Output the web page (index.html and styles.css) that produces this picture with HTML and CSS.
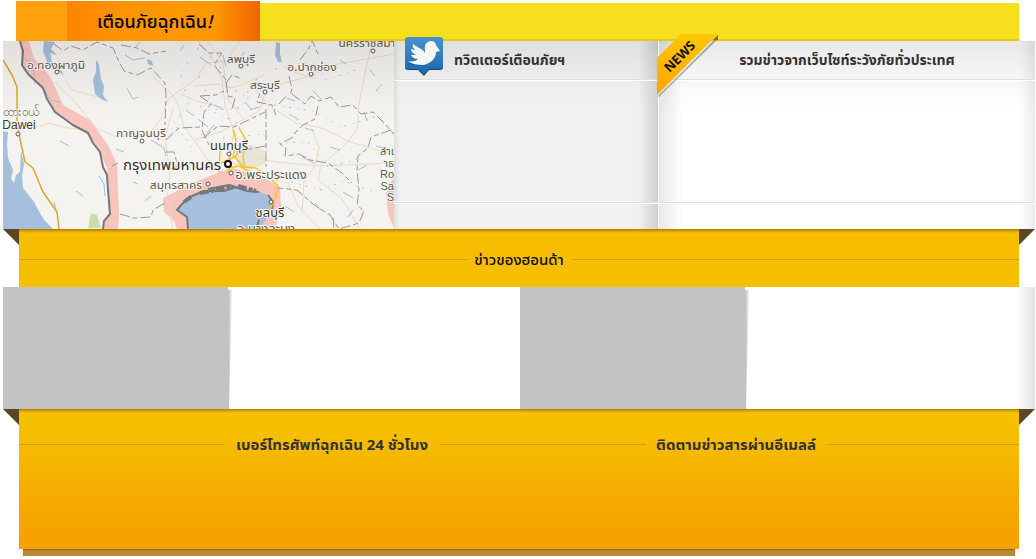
FILE: index.html
```
<!DOCTYPE html>
<html lang="th">
<head>
<meta charset="utf-8">
<meta name="viewport" content="width=device-width, initial-scale=1">
<title>เตือนภัยฉุกเฉิน!</title>
<link rel="stylesheet" href="styles.css">
</head>
<body>
<main class="page">
  <header class="topbar">
    <h1 class="topbar-title">เตือนภัยฉุกเฉิน<i>!</i></h1>
    <div class="topbar-strip"></div>
  </header>

  <section class="panels">
    <div class="map">
      <svg class="map-art" viewBox="3 41 391 188" preserveAspectRatio="xMidYMid slice" role="img" aria-label="แผนที่">
        <defs>
          <linearGradient id="shade" x1="0" y1="0" x2="0" y2="1">
            <stop offset="0" stop-color="#000" stop-opacity=".08"/>
            <stop offset=".4" stop-color="#000" stop-opacity="0"/>
          </linearGradient>
        </defs>
        <rect x="3" y="41" width="391" height="188" fill="#f4f3f0"/>
        <g class="water">
          <path d="M3 131l5 1-1 12 1 14 5 12-2 9 3 4 2-8 4-3 1-22 3 14-2 12 1 12 11 14 7 13 4 6 8 8H3z"/>
          <path d="M96 60l3 4 2 15 3 7-1 9 5 7-7-3-6-5-2-14 3-8zM44 41l11 1-4 7 6 6-7-2 2 9 8 6 4 8-10-9-6-1-2-8-3-6zM147 59l5 2 1 5-5-2zM276 42l4 1 0 11 2 8-4 0-3-7z"/>
        </g>
        <g class="coast">
          <path d="M20 41h9l5 17 16 18 13 29 27 15 18 25 9 20 2 50-1 14h-15l1-9 6-5-1-25-2-22-7-16-12-19-33-21-12-24-21-23z"/>
          <path d="M177 229l-3-8-10-9-1-14 14-7 18-9 25-10 12-4 33 10 15 10 1 20-6 21h-87z"/>
          <path d="M394 180h-2l-6 14 2 20 6 14z"/>
        </g>
        <path class="water" d="M175 210l9-8 11-9 18-3 22-3 16 2 17 6 4 7-1 8-4 8-7 11H188l-1-12z"/>
        <path fill="#c8dfaa" d="M91 213l6 2 4 13H88z"/>
        <path fill="#e8e4d8" d="M235 148l16-3 13 5 2 13-15 7-14-6z"/>
        <g class="roads">
          <path d="M55 82l20 20 22 27 17 7 15 1 20-3 12-15 7-20 28-20 10-16 20-2 14-20M33 128l16-5 13 4 22 3 22 24M65 80l7 10 26 7M153 77l18 16 8 13 4 19 13 18 12 17 10 7"/>
          <path d="M198 41l13 15 11 23 3 27 9 25-6 34M208 41l15 22 5 36 17 22M195 86l24-2 12 4 13-4 20-9M195 140l25-8 19-10 21-12 6-22 44-12 28-12 56-10M250 83l18 22 28 18 26 5 26 13 46 14M312 128l7 20-5 20-10 14-2 30M294 72l22 7M371 46l-5 22-7 36-2 26-15 18-21 17-3 15 24 19 18 30M252 157l23 5 45 4 74-3M228 160l25 15 35 8 10 23 22 23M173 108l-8 30 5 35-3 25 6 31M180 94l20 8 22 5"/>
        </g>
        <g class="streams">
          <path d="M25 58l8 9 2 17M45 91l5 9 10 2M125 55l8 5 12-2M127 88l6 11 5-2M116 149l8 3M151 140l13 8 2 8M99 176l5 8 1 12M60 141l9 5M135 48l5-6M180 51l4-6M200 57l11 8M223 55l3 12M244 52l-5 10M250 110l9-3M287 98l8 3M340 60l6 4M313 91l8 8M370 70l5 6M305 128l9 3M330 147l10 3M302 157l12 6M358 170l9-5M343 192l10 6M315 203l6 7M198 119l10 8M207 133l7-8M214 105l8 4M245 102l6 7M186 110l8 6M289 114l10 6M364 112l3 9M376 146l8 2M133 182l5 2M54 202l2 9M76 191l7 5M145 201l6-5M285 206l9 6M348 217l5-7M376 91l6-7"/>
        </g>
        <g class="specks">
          <path d="M197 48l22 16 8 22 18 10 14-20M199 76l15 34 26-2 12-15M200 106l36 16 8 14 20-2M201 135l17-8 14 27 19-8M188 62l-8 17 10 22-16 22 20 27M275 69l37-8 15 19 34-12M274 105l39 6 28 16 34-10M278 143l30-1 20 25 32-9M291 182l30 8 23-9 32 12"/>
        </g>
        <g class="borders">
          <path d="M54 44l9 7 8-5 12 4 14-8 16 6 6 14 5 9 13 4 14-7 14 15 1 13-1 29M121 45l16 3 12 6 17-3M166 140l13-12 21-1M166 152l8 0 4 14-10 4M112 166l6-3M120 214l14 4 17-1 2-7 12-7"/>
          <path d="M199 44l10 9 13 0-8 12 12 15 2 16 7 2-3 12M300 60l9-12 3-8 6 14M226 83l6-8 10 4M289 76l3 13-2 7M200 96l16-1 8-4M252 88l9 2-4 12 15 3 4 10M279 104l7-8M292 94l13 10 6-8 8 5 12-4 8 10 14-2 8 9 12-2 10 10 11 12M266 109l0 58M203 138l15-12 16 1 31-15M318 106l-3 13-12 6-10 10M293 137l-13 7 6 4-1 8 14-2 11 6 18 3 14 10 10 10M265 146l-25 5M391 130l-20 7-3 11-10 8-1 14 2 20-2 15 7 6-5 12-20 6-9-14-16-10-17-15-19-2M333 218l1 11M200 96l11 8-7 8-2 18 7 15"/>
        </g>
        <path class="frontier" d="M20 41l3 10-1 14 6 9 15 14 4 11 8 13 18 13 15 8 5 10 7 9 3 15 4 8 1 15 2 24-6 7-1 8M188 229l-1-12-10-7 6-7 9-7 12-5 20 0 12-4-7-2-21 4"/>
        <path class="frontier" d="M235 187l12 4 12 1M268 195l5 7-1 8M259 220l-3 9"/>
        <path class="shoal" d="M200 193l16-3 17-3M238 186l18 5M184 202l8-6"/>
        <path class="highway" d="M3 60l9 15 5 12 0 38 8 37 8 6 10 24 14 20 2 17"/>
        <path class="expressway" d="M233 129l3 11-3 18M239 128l8 14-4 12 1 12M230 153l-2 20M221 163l14-6 8 10 13 1 14 10 8 8-3 14-6 10M235 157l8-12M228 168l12-2 13 8M220 150l-1 23"/>
        <g class="stops">
          <circle cx="57" cy="72" r="2"/><circle cx="18" cy="134" r="2"/><circle cx="142" cy="141" r="2"/><circle cx="241" cy="66" r="2"/><circle cx="265" cy="92" r="2"/><circle cx="311" cy="74" r="2"/><circle cx="373" cy="51" r="2"/><circle cx="229" cy="154" r="2"/><circle cx="208" cy="184" r="2"/><circle cx="231" cy="173" r="2"/><circle cx="271" cy="202" r="2"/>
          <circle class="capital" cx="228" cy="164" r="3"/>
        </g>
        <g class="labels">
          <text x="56" y="69">อ.ทองผาภูมิ</text>
          <text x="141" y="137">กาญจนบุรี</text>
          <text x="241" y="63">ลพบุรี</text>
          <text x="265" y="89">สระบุรี</text>
          <text x="312" y="71">อ.ปากช่อง</text>
          <text x="367" y="47">นครราชสีมา</text>
          <text class="wide" x="271" y="179">อ.พระประแดง</text>
          <text x="176" y="189">สมุทรสาคร</text>
          <text class="wide" x="266" y="233">อ.บางละมุง</text>
          <text class="wide dark" x="229" y="150">นนทบุรี</text>
          <text class="wide dark" x="270" y="217">ชลบุรี</text>
          <text class="city" x="172" y="170">กรุงเทพมหานคร</text>
          <text x="21" y="116">ထားဝယ်</text>
          <text class="dark latin" x="19" y="129">Dawei</text>
          <g class="park">
            <text x="394" y="155">ลำเ</text><text x="394" y="167">าธ</text>
            <text x="394" y="178">Ro</text><text x="394" y="190">Sa</text><text x="394" y="201">S</text>
          </g>
        </g>
        <rect x="3" y="41" width="391" height="188" fill="url(#shade)"/>
      </svg>
    </div>

    <article class="panel panel-twitter">
      <div class="panel-head">
        <svg class="bird" viewBox="0 0 40 40" aria-hidden="true">
          <defs><linearGradient id="blue" x1="0" y1="0" x2="0" y2="1"><stop offset="0" stop-color="#4992d0"/><stop offset="1" stop-color="#1c65aa"/></linearGradient></defs>
          <path fill="#164678" d="M4 1h32a3 3 0 0 1 3 3v26a3 3 0 0 1-3 3H25l-5 6-6-6H4a3 3 0 0 1-3-3V4a3 3 0 0 1 3-3z"/>
          <path fill="url(#blue)" d="M4 0h32a3 3 0 0 1 3 3v26a3 3 0 0 1-3 3H25l-5 6-6-6H4a3 3 0 0 1-3-3V3a3 3 0 0 1 3-3z"/>
          <path fill="#184f83" opacity=".5" d="M9 10c0 5 3 7 6 9l-5 0c1 3 3 4 6 5-3 2-8 2-12 2 8 5 19 2 24-4 2-2 2-4 3-6l5-2-4-1c-1-4-7-5-9-1l-1 3z"/>
          <path fill="#f5f7f8" d="M9 7c2 2 5 3 8 5 2 1 3 2 4 4 0-5-1-9 3-11 3-2 7-1 8 3l4 6-4 1c0 7-6 12-13 13-6 0-11-1-15-4 4 1 8 0 10-2-4 0-6-2-7-4l5 0c-4-2-5-4-5-6l4 1c-2-2-3-4-2-6z"/>
        </svg>
        <h2>ทวิตเตอร์เตือนภัยฯ</h2>
      </div>
      <div class="panel-body"></div>
      <div class="panel-foot"></div>
    </article>

    <article class="panel panel-news">
      <svg class="ribbon" viewBox="0 0 62 62" aria-hidden="true">
        <defs><linearGradient id="gold" x1="0" y1="0" x2="0" y2="1"><stop offset="0" stop-color="#ffc704"/><stop offset="1" stop-color="#ffa500"/></linearGradient></defs>
        <path fill="#555" opacity=".45" d="M1 62L61 2v3L2 63z"/>
        <path fill="#9b6100" d="M56 6l5-5v5z"/>
        <path fill="url(#gold)" d="M0 24L24 0h37L0 61z"/>
        <text x="23" y="27" transform="rotate(-45 23 23)">NEWS</text>
      </svg>
      <div class="panel-head"><h2>รวมข่าวจากเว็บไซท์ระวังภัยทั่วประเทศ</h2></div>
      <div class="panel-body"></div>
      <div class="panel-foot"></div>
    </article>
  </section>

  <section class="band">
    <div class="rule"></div><h2>ข่าวของฮอนด้า</h2><div class="rule"></div>
  </section>

  <section class="stories">
    <article class="story"><div class="thumb"></div></article>
    <article class="story"><div class="thumb"></div></article>
  </section>

  <section class="band band-contact">
    <div class="rule"></div><h2>เบอร์โทรศัพท์ฉุกเฉิน 24 ชั่วโมง</h2>
    <div class="rule"></div><h2>ติดตามข่าวสารผ่านอีเมลล์</h2>
    <div class="rule"></div>
  </section>
  <div class="ledge"></div>
</main>
</body>
</html>
```
FILE: styles.css
```
* { box-sizing: border-box; }
body {
  margin: 0;
  background: #fff;
  color: #333;
  font-family: "Noto Sans Thai UI", "Noto Sans Thai", Kanit, "Noto Sans", sans-serif;
}
h1, h2 { margin: 0; white-space: nowrap; }
h2 { font-size: 15px; line-height: 20px; font-weight: 700; }
.page { padding: 1px 1px 0 3px; }

.topbar { display: flex; height: 40px; padding: 0 16px 0 13px; }
.topbar-title {
  width: 244px;
  padding-left: 33px;
  text-align: center;
  font-size: 18px;
  line-height: 40px;
  font-weight: 500;
  color: #000;
  background: linear-gradient(90deg, #ffa00c 51px, #ff8500 51px, #ff9500 110px, #ff9800 200px, #f87b00 222px, #ee6500);
}
.topbar-strip {
  flex: 1;
  margin-top: 2px;
  background: #f6e01e;
  border-bottom: 2px solid #e7c915;
}

.panels { display: grid; grid-template-columns: 391fr 264fr 377fr; }
.map { height: 188px; overflow: hidden; background: #f4f3f0; }
.map-art { display: block; width: 100%; height: 100%; }
.water { fill: #a5bfdd; }
.coast { fill: #f8c4be; }
.roads, .streams, .borders, .specks, .frontier, .shoal, .highway, .expressway { fill: none; stroke-linejoin: round; }
.roads { stroke: #e6dcc3; stroke-width: 1; }
.streams { stroke: #a5bfdd; }
.specks { stroke: #a9bfdc; stroke-dasharray: 2 7 1 5; }
.borders { stroke: #999; stroke-dasharray: 10 3 5 3; }
.frontier { stroke: #777; stroke-width: 2; }
.shoal { stroke: #777; stroke-width: 4; stroke-dasharray: 9 2 4 1; }
.highway { stroke: #e3a62b; stroke-width: 1.5; }
.expressway { stroke: #ffc21c; stroke-width: 1.5; }
.stops { fill: #fff; stroke: #555; stroke-width: 1; }
.capital { stroke: #111; stroke-width: 2; }
.labels {
  font-size: 12px;
  text-anchor: middle;
  fill: #655c50;
  stroke: #f8f7f4;
  stroke-width: 2;
  paint-order: stroke;
}
.labels .wide { font-size: 13px; }
.labels .dark { fill: #3b3732; }
.labels .city { font-size: 15px; fill: #333; }
.labels .latin, .park { font-family: "Liberation Sans", "Noto Sans Thai", sans-serif; }
.park { font-size: 11px; fill: #3f6945; text-anchor: end; }

.panel { position: relative; display: flex; flex-direction: column; }
.panel h2 { font-size: 14px; }
.panel-head { height: 39px; border-bottom: 1px solid #dedede; display: flex; align-items: center; }
.panel-body { flex: 1; border-top: 1px solid #fff; border-bottom: 1px solid #e2e2e2; }
.panel-foot { height: 26px; border-top: 1px solid #fff; }
.panel-twitter {
  background:
    linear-gradient(90deg, #00000014, #0000 6px, #0000 calc(100% - 20px), #00000024),
    linear-gradient(#e0e0e0, #ececec 38px, #f1f1f1 60px);
}
.panel-twitter .panel-head { padding-left: 10px; gap: 10px; }
.bird { flex: none; width: 40px; height: 40px; margin-top: -6px; }
.panel-news {
  background:
    linear-gradient(90deg, #00000018, #0000 24px, #0000 calc(100% - 16px), #00000014),
    linear-gradient(#e8e8e8, #f7f7f7 38px, #fff 70px);
  border-left: 1px solid #f7f7f7;
}
.panel-news .panel-head { justify-content: center; }
.ribbon { position: absolute; left: -2px; top: -7px; width: 62px; height: 62px; overflow: visible; }
.ribbon text { font: 700 13px "Open Sans", sans-serif; text-anchor: middle; fill: #111; }

.band {
  position: relative;
  display: grid;
  grid-template-columns: 1fr 105px 1fr;
  align-items: start;
  height: 58px;
  margin: 0 16px;
  padding-top: 20px;
  text-align: center;
  background: linear-gradient(#a67b00, #d79f00 2px, #f7bd00 4px, #f7bd00);
}
.band h2 { color: #111; font-weight: 500; }
.rule { height: 1px; margin-top: 10px; background: #d49d20; }
.band::before, .band::after {
  content: "";
  position: absolute;
  top: 0;
  width: 16px;
  height: 16px;
  background: #5b4823;
}
.band::before { left: -16px; clip-path: polygon(0 0, 100% 0, 100% 100%); }
.band::after { right: -16px; clip-path: polygon(0 0, 100% 0, 0 100%); }

.stories {
  display: grid;
  grid-template-columns: 517fr 515fr;
  height: 122px;
  background: linear-gradient(90deg, #fff calc(100% - 20px), #e2e2e2);
}
.thumb { position: relative; width: 225px; height: 122px; background: #c3c3c3; }
.thumb::after {
  content: "";
  position: absolute;
  left: 100%;
  top: 3px;
  width: 4px;
  height: 119px;
  background: linear-gradient(90deg, #bbb, #f4f4f4);
  clip-path: polygon(0 0, 100% 0, 25% 100%, 0 100%);
}

.band-contact {
  grid-template-columns: 205fr 216px 206fr 180px 193fr;
  height: 140px;
  padding-top: 25px;
  background: linear-gradient(#a67b00, #d7a800 2px, #f6c100 4px, #f6bd00 30px, #f6aa00 90px, #f5a000);
}
.band-contact h2 { color: #333; font-weight: 700; }
.ledge {
  height: 7px;
  margin: 0 20px;
  background: linear-gradient(#88631f, #b78a35 2px);
  box-shadow: 0 2px 1px #999;
}
```
